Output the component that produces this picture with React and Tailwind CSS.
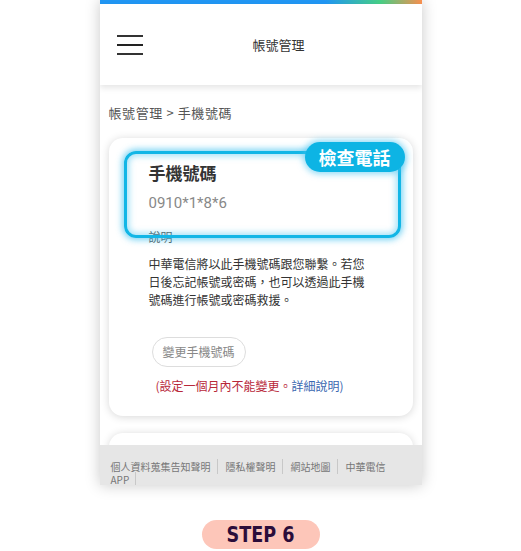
const cjk = { fontFamily: '"Noto Sans CJK TC", "Noto Sans", sans-serif' };

function Hamburger() {
  return (
    <div className="flex flex-col gap-[7px] w-[26px]">
      <span className="block h-[2px] bg-[#333]" />
      <span className="block h-[2px] bg-[#222]" />
      <span className="block h-[2px] bg-[#333]" />
    </div>
  );
}

function FooterLink({ children }) {
  return (
    <span className="pr-[6px] mr-[8px] border-r border-[#c8c8c8]">{children}</span>
  );
}

export default function App() {
  return (
    <div className="w-[521px] h-[551px] bg-white overflow-hidden" style={cjk}>
      {/* phone screen */}
      <div className="relative w-[322px] h-[485px] mx-auto bg-white shadow-[0_0_14px_rgba(0,0,0,0.22)] overflow-hidden flex flex-col">
        <div className="h-[4px] shrink-0 bg-[linear-gradient(to_right,#2196f3_0%,#2196f3_70%,#46cf86_87%,#f98f4f_100%)]" />

        {/* header */}
        <div className="relative z-10 h-[81px] shrink-0 flex items-center pl-[17px] bg-white shadow-[0_3px_6px_rgba(0,0,0,0.1)]">
          <Hamburger />
          <span className="ml-[110px] text-[13px] text-[#333]">帳號管理</span>
        </div>

        {/* content */}
        <div className="flex-1 px-[9px] pt-[19px]">
          <p className="text-[13px] leading-[18px] tracking-[0.6px] text-[#555]">帳號管理 &gt; 手機號碼</p>

          <div className="relative mt-[16px] rounded-[14px] bg-white shadow-[0_1px_8px_rgba(0,0,0,0.16)] pl-[40px] pt-[23px] pb-[21px]">
            <h2 className="text-[17px] leading-[24px] font-bold text-[#333]">手機號碼</h2>
            <p className="mt-[7px] text-[15px] leading-[22px] text-[#888]" style={{ fontFamily: 'Roboto, sans-serif' }}>0910*1*8*6</p>
            <p className="mt-[14px] text-[12px] leading-[18px] text-[#555]">說明</p>
            <p className="mt-[9px] text-[12px] leading-[18px] text-[#333]">
              中華電信將以此手機號碼跟您聯繫。若您<br />
              日後忘記帳號或密碼，也可以透過此手機<br />
              號碼進行帳號或密碼救援。
            </p>
            <button className="mt-[28px] ml-[3px] h-[30px] w-[94px] rounded-full border border-[#ddd] text-[12px] text-[#888] bg-white">
              變更手機號碼
            </button>
            <p className="mt-[10px] ml-[7px] text-[12px] leading-[18px]">
              <span className="text-[#b8283a]">(設定一個月內不能變更。</span>
              <span className="text-[#3a67b0]">詳細說明)</span>
            </p>

            {/* annotation highlight */}
            <div className="absolute left-[15px] top-[13px] w-[277px] h-[87px] rounded-[12px] border-[3px] border-[#12b6e6] shadow-[0_0_6px_2px_rgba(70,195,240,0.7),inset_0_0_6px_2px_rgba(70,195,240,0.5)]" />
            <div className="absolute left-[196px] top-[4px] w-[100px] h-[30px] rounded-full bg-[#0db4e4] flex items-center justify-center text-white font-bold text-[18px] shadow-[0_0_6px_2px_rgba(70,195,240,0.6)]">
              檢查電話
            </div>
          </div>

          <div className="mt-[17px] h-[20px] rounded-t-[14px] bg-white shadow-[0_1px_8px_rgba(0,0,0,0.16)]" />
        </div>

        {/* footer */}
        <div className="absolute left-0 right-0 bottom-0 h-[40px] bg-[#e6e6e6] pl-[11px] pr-[20px] pt-[15px] text-[10px] leading-[13px] text-[#777] overflow-hidden">
          <FooterLink>個人資料蒐集告知聲明</FooterLink>
          <FooterLink>隱私權聲明</FooterLink>
          <FooterLink>網站地圖</FooterLink>
          <span>中華電信</span>{' '}
          <span className="pr-[6px] border-r border-[#c8c8c8]">APP</span>
        </div>
      </div>

      <div className="flex justify-center mt-[35px]">
        <div className="w-[118px] h-[29px] rounded-full bg-[#fdc6b9] flex items-center justify-center">
          <span
            className="inline-block scale-x-[0.8] text-[22px] leading-[29px] font-bold text-[#2b0d3a]"
            style={{ fontFamily: '"DejaVu Sans", sans-serif' }}
          >
            STEP 6
          </span>
        </div>
      </div>
    </div>
  );
}
